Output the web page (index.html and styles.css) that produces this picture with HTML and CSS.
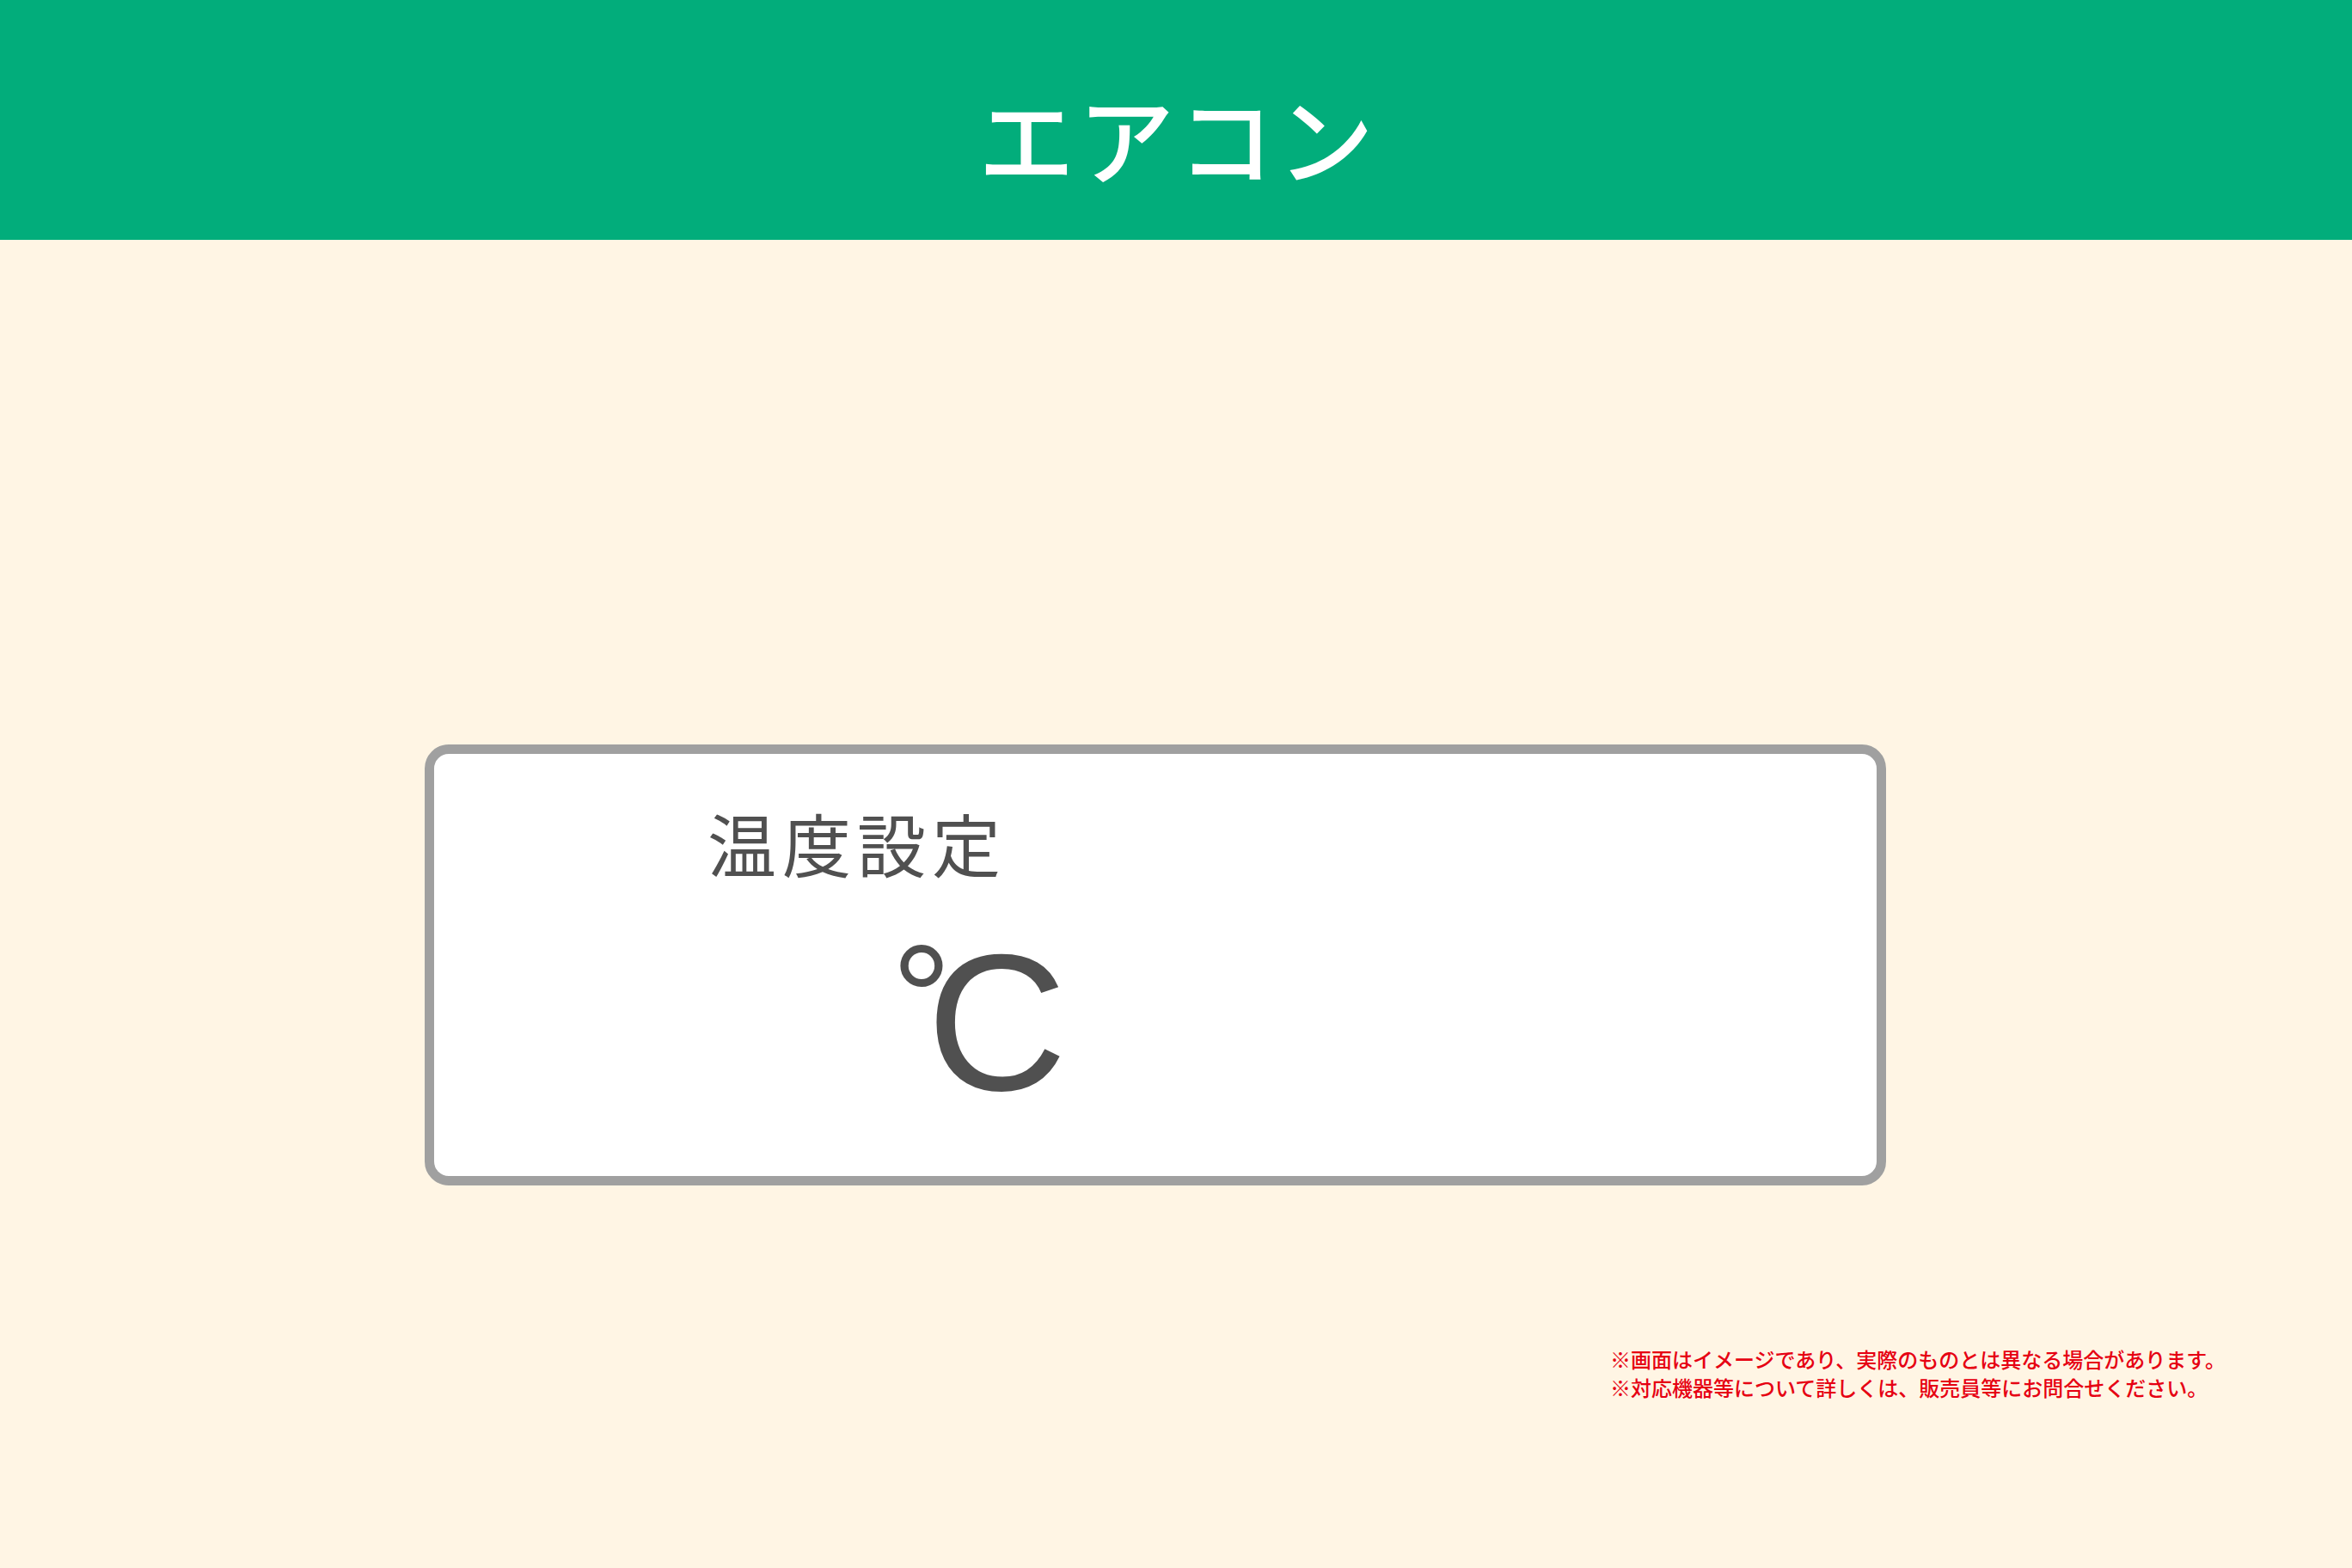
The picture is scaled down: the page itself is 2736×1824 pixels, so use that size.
FILE: index.html
```html
<!DOCTYPE html>
<html lang="ja">
<head>
<meta charset="utf-8">
<title>エアコン</title>
<link rel="stylesheet" href="styles.css">
</head>
<body>
<header class="topbar">
  <h1 class="topbar-title">エアコン</h1>
</header>
<main class="stage">
  <section class="panel">
    <div class="panel-label">温度設定</div>
    <div class="temp"><span class="temp-deg">°</span><span class="temp-unit">C</span></div>
  </section>
  <div class="notes">
    <p class="note">※画面はイメージであり、実際のものとは異なる場合があります。</p>
    <p class="note">※対応機器等について詳しくは、販売員等にお問合せください。</p>
  </div>
</main>
</body>
</html>
```

FILE: styles.css
```css
html, body {
  margin: 0;
  padding: 0;
}
body {
  width: 2736px;
  height: 1824px;
  background: #fff5e4;
  font-family: "Noto Sans CJK JP", "Noto Sans", sans-serif;
  overflow: hidden;
}
.topbar {
  height: 279px;
  background: #02ad7b;
  display: flex;
  justify-content: center;
  align-items: flex-start;
  box-sizing: border-box;
  padding-top: 102px;
}
.topbar-title {
  margin: 0;
  color: #ffffff;
  font-size: 112px;
  font-weight: 500;
  line-height: 1;
  letter-spacing: 4px;
  padding-left: 4px;
}
.stage {
  display: flex;
  flex-direction: column;
  padding-top: 587px;
}
.panel {
  margin-left: 494px;
  width: 1700px;
  height: 513px;
  box-sizing: border-box;
  border: 11px solid #a0a0a0;
  border-radius: 28px;
  background: #ffffff;
  padding: 62px 0 0 318px;
  display: flex;
  flex-direction: column;
  align-items: flex-start;
}
.panel-label {
  color: #505050;
  font-size: 80px;
  font-weight: 400;
  line-height: 1;
  letter-spacing: 7px;
  white-space: nowrap;
}
.temp {
  margin-top: 58px;
  margin-left: 214px;
  display: flex;
  align-items: flex-start;
  color: #505050;
  font-family: "Liberation Sans", Arial, sans-serif;
}
.temp-deg {
  font-size: 175px;
  line-height: 1;
  margin-top: -4px;
}
.temp-unit {
  font-size: 226px;
  line-height: 1;
  margin-left: -29px;
}
.notes {
  margin-top: 185px;
  margin-left: 1873px;
  color: #e60012;
  font-size: 24px;
  font-weight: 500;
  line-height: 33px;
}
.note {
  margin: 0;
  white-space: nowrap;
}
```
